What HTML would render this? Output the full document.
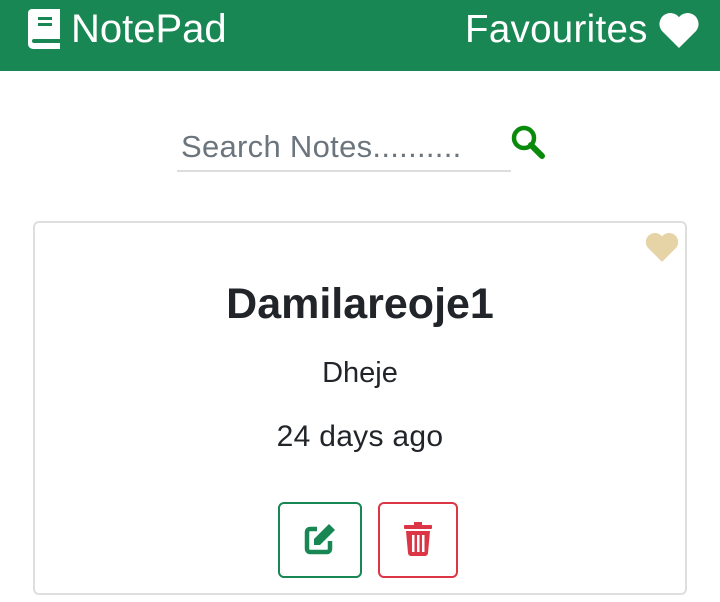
<!DOCTYPE html><html><head><style>
body{margin:0;width:720px;height:602px;background:#fff;font-family:"Liberation Sans",sans-serif;overflow:hidden;position:relative}
.hdr{position:absolute;left:0;top:0;width:720px;height:71px;background:#198754;color:#fff}
.a{position:absolute;white-space:nowrap}
</style></head><body>
<div class="hdr">
<svg class="a" style="left:28px;top:9px" width="36" height="40" viewBox="0 0 36 40"><path d="M4 0h28v30H6a2 2 0 0 0 0 4h26v6H5a5 5 0 0 1-5-5V4a4 4 0 0 1 4-4z" fill="#fff"/><rect x="10" y="8" width="14" height="3" fill="#198754"/><rect x="10" y="14" width="14" height="3" fill="#198754"/></svg>
<div class="a" style="left:71px;top:7px;font-size:40px">NotePad</div>
<div class="a" style="left:465px;top:8px;font-size:38.5px;letter-spacing:0.3px">Favourites</div>
<svg class="a" style="left:658px;top:12px" width="42" height="36" viewBox="0 0 24 21"><path d="M12 21L2 11A6 6 0 0 1 12 3a6 6 0 0 1 10 8z" fill="#fff"/></svg>
</div>
<div class="a" style="left:181px;top:129px;font-size:31px;color:#6c757d;letter-spacing:0.3px">Search Notes..........</div>
<div class="a" style="left:177px;top:170px;width:334px;height:2px;background:#ddd"></div>
<svg class="a" style="left:511px;top:125px" width="34" height="34" viewBox="0 0 34 34"><circle cx="13" cy="13" r="10" fill="none" stroke="#0a8a0a" stroke-width="4.5"/><path d="M20 20l11 11" stroke="#0a8a0a" stroke-width="6" stroke-linecap="round"/></svg>
<div class="a" style="left:33px;top:221px;width:650px;height:370px;border:2px solid #dedede;border-radius:6px"></div>
<svg class="a" style="left:645px;top:232px" width="34" height="30" viewBox="0 0 24 21"><path d="M12 21L2 11A6 6 0 0 1 12 3a6 6 0 0 1 10 8z" fill="#e6d4a6"/></svg>
<div class="a" style="left:0;width:720px;text-align:center;top:280px;font-size:43px;font-weight:bold;color:#212529">Damilareoje1</div>
<div class="a" style="left:0;width:720px;text-align:center;top:357px;font-size:29px;color:#212529">Dheje</div>
<div class="a" style="left:0;width:720px;text-align:center;top:420px;font-size:30px;color:#212529;letter-spacing:0.3px">24 days ago</div>
<div class="a" style="left:278px;top:502px;width:80px;height:72px;border:2px solid #198754;border-radius:6px"></div>
<svg class="a" style="left:303px;top:522px" width="34" height="34" viewBox="0 0 34 34"><path d="M14 7H7a3 3 0 0 0-3 3v17a3 3 0 0 0 3 3h17a3 3 0 0 0 3-3v-8" fill="none" stroke="#198754" stroke-width="4.5"/><path d="M11 17L26 2l6 6-15 15h-6z" fill="#198754"/></svg>
<div class="a" style="left:378px;top:502px;width:76px;height:72px;border:2px solid #dc3545;border-radius:6px"></div>
<svg class="a" style="left:403px;top:522px" width="30" height="34" viewBox="0 0 30 34"><rect x="1" y="3" width="28" height="4" rx="1" fill="#dc3545"/><rect x="11" y="0" width="8" height="4" fill="#dc3545"/><path d="M3 9h24l-2 22a3 3 0 0 1-3 3H8a3 3 0 0 1-3-3z" fill="#dc3545"/><rect x="9" y="13" width="2.5" height="17" fill="#fff"/><rect x="14" y="13" width="2.5" height="17" fill="#fff"/><rect x="19" y="13" width="2.5" height="17" fill="#fff"/></svg>
</body></html>
